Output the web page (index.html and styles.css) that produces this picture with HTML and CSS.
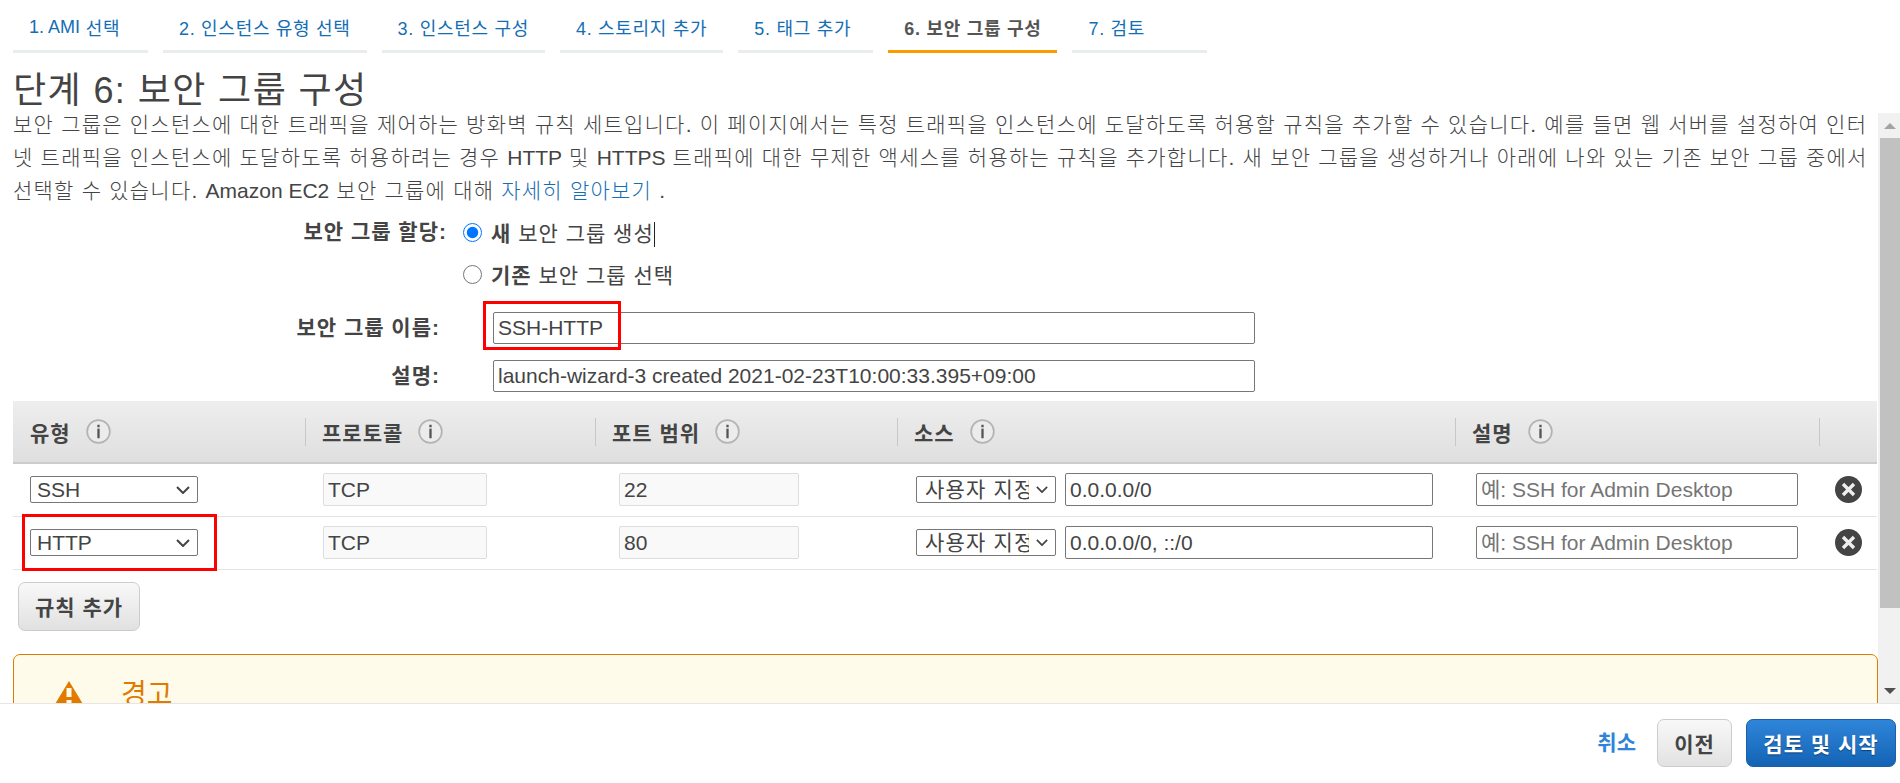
FILE: index.html
```html
<!DOCTYPE html>
<html lang="ko">
<head>
<meta charset="utf-8">
<title>단계 6: 보안 그룹 구성</title>
<link rel="stylesheet" href="styles.css">
</head>
<body>
<div class="wizard">
  <nav class="tabs">
    <a class="tab"><span class="latin">1. AMI</span>&nbsp;선택</a>
    <a class="tab">2. 인스턴스 유형 선택</a>
    <a class="tab">3. 인스턴스 구성</a>
    <a class="tab">4. 스토리지 추가</a>
    <a class="tab">5. 태그 추가</a>
    <a class="tab tab-active">6. 보안 그룹 구성</a>
    <a class="tab">7. 검토</a>
  </nav>
  <h1 class="title">단계 6: 보안 그룹 구성</h1>
  <div class="pane">
    <main class="content">
      <p class="intro">보안 그룹은 인스턴스에 대한 트래픽을 제어하는 방화벽 규칙 세트입니다. 이 페이지에서는 특정 트래픽을 인스턴스에 도달하도록 허용할 규칙을 추가할 수 있습니다. 예를 들면 웹 서버를 설정하여 인터<br>넷 트래픽을 인스턴스에 도달하도록 허용하려는 경우 <span class="latin">HTTP</span> 및 <span class="latin">HTTPS</span> 트래픽에 대한 무제한 액세스를 허용하는 규칙을 추가합니다. 새 보안 그룹을 생성하거나 아래에 나와 있는 기존 보안 그룹 중에서<br>선택할 수 있습니다. <span class="latin">Amazon EC2</span> 보안 그룹에 대해 <a class="link">자세히 알아보기</a> .</p>

      <div class="assign">
        <div class="assign-label">보안 그룹 할당:</div>
        <div class="assign-options">
          <label class="radio-row"><input type="radio" name="sg" class="radio" checked><span><b>새</b> 보안 그룹 생성<i class="caret"></i></span></label>
          <label class="radio-row"><input type="radio" name="sg" class="radio"><span><b>기존</b> 보안 그룹 선택</span></label>
        </div>
      </div>

      <div class="field field-name">
        <label class="field-label">보안 그룹 이름:</label>
        <div class="field-control">
          <input class="text-input" type="text" value="SSH-HTTP">
          <span class="mark mark-name"></span>
        </div>
      </div>
      <div class="field">
        <label class="field-label">설명:</label>
        <div class="field-control">
          <input class="text-input" type="text" value="launch-wizard-3 created 2021-02-23T10:00:33.395+09:00">
        </div>
      </div>

      <table class="rules">
        <colgroup>
          <col class="c1"><col class="c2"><col class="c3"><col class="c4"><col class="c5"><col class="c6">
        </colgroup>
        <thead>
          <tr>
            <th class="p1"><span class="th-in">유형<svg class="info" viewBox="0 0 26 26"><circle cx="13" cy="13" r="11.8"/><rect x="11.8" y="6" width="2.4" height="2.6"/><rect x="11.8" y="10" width="2.4" height="10"/></svg></span></th>
            <th><span class="th-in sep">프로토콜<svg class="info" viewBox="0 0 26 26"><circle cx="13" cy="13" r="11.8"/><rect x="11.8" y="6" width="2.4" height="2.6"/><rect x="11.8" y="10" width="2.4" height="10"/></svg></span></th>
            <th><span class="th-in sep">포트 범위<svg class="info" viewBox="0 0 26 26"><circle cx="13" cy="13" r="11.8"/><rect x="11.8" y="6" width="2.4" height="2.6"/><rect x="11.8" y="10" width="2.4" height="10"/></svg></span></th>
            <th><span class="th-in sep">소스<svg class="info" viewBox="0 0 26 26"><circle cx="13" cy="13" r="11.8"/><rect x="11.8" y="6" width="2.4" height="2.6"/><rect x="11.8" y="10" width="2.4" height="10"/></svg></span></th>
            <th><span class="th-in sep">설명<svg class="info" viewBox="0 0 26 26"><circle cx="13" cy="13" r="11.8"/><rect x="11.8" y="6" width="2.4" height="2.6"/><rect x="11.8" y="10" width="2.4" height="10"/></svg></span></th>
            <th><span class="th-in sep"></span></th>
          </tr>
        </thead>
        <tbody>
          <tr>
            <td class="p1"><span class="sel-wrap"><select class="sel sel-type"><option>SSH</option></select></span></td>
            <td class="p2"><input class="text-input ro ro-proto" type="text" value="TCP" readonly></td>
            <td class="p3"><input class="text-input ro ro-port" type="text" value="22" readonly></td>
            <td class="p4"><div class="source"><select class="sel sel-src"><option>사용자 지정</option></select><input class="text-input src-in" type="text" value="0.0.0.0/0"></div></td>
            <td class="p5"><input class="text-input desc-in" type="text" placeholder="예: SSH for Admin Desktop"></td>
            <td class="p6"><svg class="remove" viewBox="0 0 27 27"><circle cx="13.5" cy="13.5" r="13.5"/><path d="M8 8 19 19M19 8 8 19"/></svg></td>
          </tr>
          <tr>
            <td class="p1"><span class="sel-wrap"><select class="sel sel-type"><option>HTTP</option></select><span class="mark mark-http"></span></span></td>
            <td class="p2"><input class="text-input ro ro-proto" type="text" value="TCP" readonly></td>
            <td class="p3"><input class="text-input ro ro-port" type="text" value="80" readonly></td>
            <td class="p4"><div class="source"><select class="sel sel-src"><option>사용자 지정</option></select><input class="text-input src-in" type="text" value="0.0.0.0/0, ::/0"></div></td>
            <td class="p5"><input class="text-input desc-in" type="text" placeholder="예: SSH for Admin Desktop"></td>
            <td class="p6"><svg class="remove" viewBox="0 0 27 27"><circle cx="13.5" cy="13.5" r="13.5"/><path d="M8 8 19 19M19 8 8 19"/></svg></td>
          </tr>
        </tbody>
      </table>

      <button class="btn btn-add" type="button">규칙 추가</button>

      <section class="alert">
        <svg class="alert-icon" viewBox="0 0 34 28"><path d="M17 0 34 28H0Z"/><rect class="bang" x="14.5" y="7" width="5" height="9"/><rect class="bang" x="14.5" y="19" width="5" height="5"/></svg>
        <h2 class="alert-title">경고</h2>
      </section>
    </main>
    <div class="scrollbar">
      <div class="sb-btn"><span class="arrow-up"></span></div>
      <div class="sb-track"><div class="sb-thumb"></div></div>
      <div class="sb-btn sb-btn-down"><span class="arrow-down"></span></div>
    </div>
  </div>
  <footer class="footer">
    <a class="cancel">취소</a>
    <button class="btn btn-prev" type="button">이전</button>
    <button class="btn btn-primary" type="button">검토 및 시작</button>
  </footer>
</div>
</body>
</html>
```
FILE: styles.css
```css
* { box-sizing: border-box; }
html, body { margin: 0; padding: 0; height: 100%; }
body {
  font-family: "Liberation Sans", "Noto Sans CJK KR", sans-serif;
  font-size: 21px;
  color: #444;
  background: #fff;
  overflow: hidden;
}
.wizard { display: flex; flex-direction: column; height: 783px; }
.latin { letter-spacing: 0; }

.tabs { display: flex; gap: 15px; height: 53px; padding-left: 13px; flex: none; }
.tab {
  display: flex; align-items: center; padding: 4px 16px 0; min-width: 135px;
  font-size: 18px; letter-spacing: .7px; color: #146eb4; border-bottom: 3px solid #eaeded; white-space: nowrap;
}
.tab-active { color: #555; font-weight: bold; border-bottom-color: #ff9900; }

.title { margin: 20px 0 0 13px; font-size: 36px; letter-spacing: 1.4px; font-weight: normal; line-height: 35px; height: 35px; color: #444; flex: none; }

.pane { display: flex; height: 595px; flex: none; }
.content { flex: 1; min-width: 0; overflow: hidden; padding-left: 13px; }

.intro { margin: 0; line-height: 33px; white-space: nowrap; letter-spacing: 1.22px; font-weight: 300; }
.link { color: #146eb4; }

.assign { display: flex; margin-top: 4px; }
.assign-label { width: 434px; text-align: right; font-weight: bold; line-height: 42px; letter-spacing: 1px; }
.assign-options { margin-left: 16px; letter-spacing: 1px; }
.radio-row { display: flex; align-items: center; gap: 9px; height: 42px; }
.radio { width: 19px; height: 19px; margin: 0; accent-color: #0075ff; flex: none; }
.caret { display: inline-block; width: 1px; height: 25px; background: #222; vertical-align: middle; }

.field { display: flex; margin-bottom: 16px; height: 32px; }
.field-name { margin-top: 17px; }
.field-label { width: 427px; text-align: right; font-weight: bold; line-height: 32px; letter-spacing: 1px; }
.field-control { position: relative; margin-left: 53px; }
.text-input {
  display: block; height: 32px; width: 762px; padding: 0 4px;
  font: inherit; color: #444; background: #fff;
  border: 1px solid #777; border-radius: 2px;
}
.mark { position: absolute; border: 3px solid #f00; pointer-events: none; }
.mark-name { left: -10px; top: -11px; width: 138px; height: 49px; }
.mark-http { left: -8px; top: -15px; width: 195px; height: 57px; }

.rules { table-layout: fixed; border-collapse: collapse; width: 1864px; margin-top: -7px; }
.c1 { width: 292px; } .c2 { width: 290px; } .c3 { width: 302px; }
.c4 { width: 558px; } .c5 { width: 364px; } .c6 { width: 58px; }
.rules th {
  height: 62px; padding: 0; text-align: left; font-weight: bold; letter-spacing: 1px;
  background: linear-gradient(#eeeeee, #dfdfdf);
  border-bottom: 2px solid #ccc;
}
.rules th.p1 { padding-left: 16px; }
.th-in { display: flex; align-items: center; gap: 15px; height: 28px; }
.sep { border-left: 1px solid #c8c8c8; padding-left: 16px; }
.info { width: 25px; height: 25px; flex: none; }
.info circle { fill: #ececec; stroke: #b4b4b4; stroke-width: 1.8; }
.info rect { fill: #555; }
.rules td { height: 53px; padding: 0; border-bottom: 1px solid #e1e4e8; vertical-align: middle; }
.p1 { padding-left: 17px !important; }
.p2 { padding-left: 18px !important; }
.p3 { padding-left: 24px !important; }
.p4 { padding-left: 19px !important; }
.p5 { padding-left: 21px !important; }
.p6 { text-align: center; }

.sel-wrap { position: relative; display: block; }
.sel {
  appearance: none; height: 27px; font: inherit; color: #444;
  background-color: #fff; background-repeat: no-repeat;
  background-image: url("data:image/svg+xml,%3Csvg xmlns='http://www.w3.org/2000/svg' width='14' height='8'%3E%3Cpath d='M1 1 7 7 13 1' fill='none' stroke='%23444' stroke-width='2'/%3E%3C/svg%3E");
  border: 1px solid #777; border-radius: 2px;
}
.sel-type { width: 168px; display: block; padding: 0 28px 0 6px; background-position: right 7px center; }
.sel-src { width: 140px; flex: none; padding: 0 26px 0 8px; background-position: right 7px center; background-size: 12px 7px; letter-spacing: 1.2px; }
.ro { background: #f9f9f9; border-color: #ddd; height: 33px; }
.ro-proto { width: 164px; }
.ro-port { width: 180px; }
.source { display: flex; align-items: center; gap: 9px; }
.src-in { width: 368px; height: 33px; }
.desc-in { width: 322px; height: 33px; }
.desc-in::placeholder { color: #757575; }
.remove { width: 27px; height: 27px; display: inline-block; vertical-align: middle; margin-right: -1px; }
.remove circle { fill: #444; }
.remove path { stroke: #eee; stroke-width: 3.4; fill: none; }

.btn { font: inherit; font-weight: bold; height: 48px; border-radius: 7px; cursor: pointer; padding: 0; letter-spacing: 1px; }
.btn-add {
  display: block; width: 122px; height: 49px; margin: 12px 0 0 5px; color: #444;
  background: linear-gradient(#f8f8f8, #e1e1e1); border: 1px solid #ccc;
}
.alert {
  display: flex; align-items: flex-start; height: 120px; margin-top: 23px;
  padding: 26px 0 0 38px;
  background: #fffbeb; border: 1px solid #e07b00; border-radius: 7px;
}
.alert-icon { width: 34px; height: 28px; flex: none; }
.alert-icon path { fill: #e07b00; }
.alert-icon .bang { fill: #fffbeb; }
.alert-title { margin: -2px 0 0 35px; font-size: 28px; line-height: 32px; font-weight: normal; color: #e07b00; }

.scrollbar { width: 22px; flex: none; margin-top: 5px; background: #f1f1f1; display: flex; flex-direction: column; }
.sb-btn { height: 25px; display: flex; justify-content: center; align-items: center; flex: none; padding-left: 2px; }
.sb-btn-down { padding-top: 6px; height: 30px; }
.arrow-up { border: 6px solid transparent; border-top: 0; border-bottom: 6px solid #a3a3a3; }
.arrow-down { border: 6px solid transparent; border-bottom: 0; border-top: 6px solid #505050; }
.sb-track { flex: 1; padding-left: 2px; }
.sb-thumb { height: 470px; background: #c1c1c1; }

.footer {
  flex: 1; display: flex; justify-content: flex-end; align-items: flex-start; gap: 14px;
  padding: 15px 4px 0 0; border-top: 1px solid #e6e6e6; background: #fff;
}
.cancel { color: #2f84d8; font-weight: bold; line-height: 48px; margin-right: 7px; }
.btn-prev { width: 75px; color: #444; background: linear-gradient(#f8f8f8, #e2e2e2); border: 1px solid #ccc; }
.btn-primary {
  width: 150px; color: #fff; background: linear-gradient(#2f86d9, #1463b5);
  border: 1px solid #1a5fa8; text-shadow: 0 1px 1px #0b3f78;
}
```
